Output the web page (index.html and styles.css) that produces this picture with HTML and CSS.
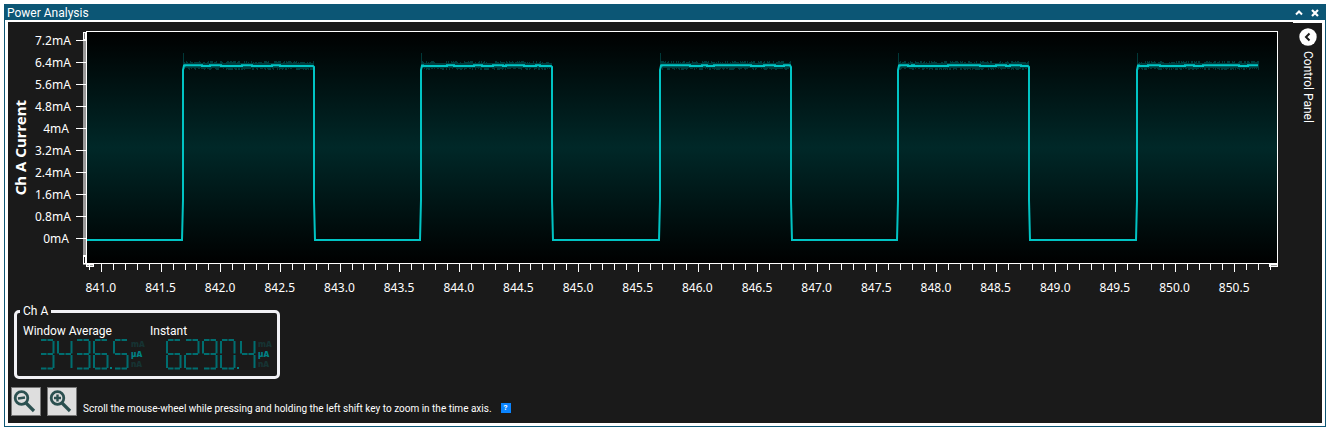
FILE: index.html
```
<!DOCTYPE html>
<html lang="en">
<head>
<meta charset="utf-8">
<title>Power Analysis</title>
<link rel="stylesheet" href="styles.css">
</head>
<body>
<section class="window">
  <header class="titlebar">
    <h1 class="title">Power Analysis</h1>
    <div class="window-actions">
      <button type="button" class="title-button" aria-label="Collapse">
        <svg width="8" height="8" viewBox="0 0 8 8"><path d="M1 5.5 4 2.5 7 5.5" fill="none" stroke="#fff" stroke-width="2"/></svg>
      </button>
      <button type="button" class="title-button" aria-label="Close">
        <svg width="8" height="8" viewBox="0 0 8 8"><path d="M1 1 7 7M7 1 1 7" fill="none" stroke="#fff" stroke-width="2.2"/></svg>
      </button>
    </div>
  </header>
  <div class="content">
    <main class="workspace">
      <div class="chart">
        <div class="axis-title">Ch A Current</div>
        <div class="y-labels">
          <span>7.2mA</span><span>6.4mA</span><span>5.6mA</span><span>4.8mA</span><span>4mA</span><span>3.2mA</span><span>2.4mA</span><span>1.6mA</span><span>0.8mA</span><span>0mA</span>
        </div>
        <svg class="plot" viewBox="0 0 1202 243" preserveAspectRatio="none" role="img" aria-label="Channel A current over time">
          <defs>
            <linearGradient id="glow" x1="0" y1="0" x2="0" y2="1">
              <stop offset="0" stop-color="#000"/>
              <stop offset="0.5" stop-color="#002828"/>
              <stop offset="1" stop-color="#000"/>
            </linearGradient>
          </defs>
          <g shape-rendering="crispEdges">
            <rect x="7" y="2" width="3" height="233" fill="#999"/>
            <rect x="7" y="2" width="3" height="9" fill="#fff"/>
            <rect x="8" y="3" width="1" height="6" fill="#777"/>
            <rect x="7" y="225" width="3" height="9" fill="#fff"/>
            <rect x="8" y="227" width="1" height="6" fill="#1a1a1a"/>
            <rect x="10" y="1" width="1192" height="233" fill="url(#glow)"/>
            <path d="M10.500 1.500H1201.500V233.500H10.500Z" fill="none" stroke="#fff"/>
            <rect x="10" y="234" width="8" height="3" fill="#fff"/>
            <rect x="11" y="235" width="6" height="1" fill="#999"/>
            <rect x="1193" y="234" width="9" height="3" fill="#fff"/>
            <rect x="1195" y="235" width="6" height="1" fill="#999"/>
            <path id="ticks" fill="none" stroke="#fff"/>
            <path id="noise" fill="none" stroke="#00c4c4" stroke-opacity="0.26"/>
          </g>
          <path id="wave" fill="none" stroke="#00c4c4" stroke-width="2"/>
        </svg>
        <div class="x-labels">
          <span>841.0</span><span>841.5</span><span>842.0</span><span>842.5</span><span>843.0</span><span>843.5</span><span>844.0</span><span>844.5</span><span>845.0</span><span>845.5</span><span>846.0</span><span>846.5</span><span>847.0</span><span>847.5</span><span>848.0</span><span>848.5</span><span>849.0</span><span>849.5</span><span>850.0</span><span>850.5</span>
        </div>
      </div>

      <svg class="symbols" width="0" height="0" aria-hidden="true">
        <defs>
          <path id="seg-a" d="M2 1H7.500M8.500 1H14"/>
          <path id="seg-b" d="M14.500 2V14.500"/>
          <path id="seg-c" d="M14.500 16V29"/>
          <path id="seg-d" d="M2 29.500H7.500M8.500 29.500H14"/>
          <path id="seg-e" d="M1 16V29"/>
          <path id="seg-f" d="M1 2V14.500"/>
          <path id="seg-g" d="M2 15H7.500M8.500 15H14"/>
        </defs>
      </svg>
      <fieldset class="channel">
        <legend>Ch A</legend>
        <div class="meter">
          <div class="meter-name">Window Average</div>
          <div class="readout">
            <svg class="digits" data-value="3436.5" width="92" height="32" viewBox="0 0 92 32" role="img" aria-label="3436.5"></svg>
            <div class="units"><span>mA</span><span class="active">µA</span><span>nA</span></div>
          </div>
        </div>
        <div class="meter">
          <div class="meter-name">Instant</div>
          <div class="readout">
            <svg class="digits" data-value="6290.4" width="92" height="32" viewBox="0 0 92 32" role="img" aria-label="6290.4"></svg>
            <div class="units"><span>mA</span><span class="active">µA</span><span>nA</span></div>
          </div>
        </div>
      </fieldset>

      <footer class="toolbar">
        <button type="button" class="zoom-button" aria-label="Zoom out">
          <svg width="26" height="26" viewBox="0 0 26 26" fill="none" stroke="#2b5050"><circle cx="9.500" cy="9" r="6.300" stroke-width="2.800"/><path d="M14 14 22 22" stroke-width="3.200"/><path d="M6 9.500 13 8.500" stroke-width="2.400"/></svg>
        </button>
        <button type="button" class="zoom-button" aria-label="Zoom in">
          <svg width="26" height="26" viewBox="0 0 26 26" fill="none" stroke="#2b5050"><circle cx="9.500" cy="9" r="6.300" stroke-width="2.800"/><path d="M14 14 22 22" stroke-width="3.200"/><path d="M6 9H13M9.500 5.500V12.500" stroke-width="2.400"/></svg>
        </button>
        <p class="hint">Scroll the mouse-wheel while pressing and holding the left shift key to zoom in the time axis.</p>
        <button type="button" class="help">?</button>
      </footer>
    </main>
    <aside class="side">
      <button type="button" class="side-toggle">
        <svg width="18" height="18" viewBox="0 0 18 18"><circle cx="9" cy="9" r="8.700" fill="#fff"/><path d="M10.500 5.500 7 9 10.500 12.500" fill="none" stroke="#1a1a1a" stroke-width="2"/></svg>
        <span>Control Panel</span>
      </button>
    </aside>
  </div>
</section>
<script src="chart.js"></script>
</body>
</html>
```

FILE: styles.css
```
* {
  box-sizing: border-box;
}

body {
  margin: 0;
  padding: 4px 6px 7px 4px;
  min-height: 100vh;
  display: flex;
  background: #fff;
  color: #fff;
  font-family: Roboto, "Open Sans", sans-serif;
  font-size: 12px;
}

button {
  margin: 0;
  padding: 0;
  border: 0;
  background: none;
  color: inherit;
  font: inherit;
}

svg {
  display: block;
}

.window {
  flex: 1;
  min-width: 0;
  display: flex;
  flex-direction: column;
  border: 1px solid #0c5675;
  border-top: 0;
}

.titlebar {
  height: 16px;
  display: flex;
  align-items: center;
  justify-content: space-between;
  padding: 1px 6px 0 2px;
  background: #0c5675;
}

.title {
  margin: 0;
  font-size: 12px;
  line-height: 16px;
  font-weight: 400;
}

.window-actions {
  display: flex;
  gap: 8px;
}

.content {
  flex: 1;
  display: flex;
  margin: 2px 3px 3px;
  background: #1a1a1a;
}

.workspace {
  flex: 1;
  min-width: 0;
  display: flex;
  flex-direction: column;
  padding: 8px 15px 6px 0;
}

.chart {
  display: grid;
  grid-template-columns: 24px 38px minmax(0, 1fr);
  grid-template-rows: 243px 28px;
  column-gap: 3px;
  font-family: "Noto Sans", sans-serif;
}

.axis-title {
  writing-mode: vertical-rl;
  transform: rotate(180deg);
  justify-self: center;
  align-self: center;
  padding-top: 8px;
  font-size: 15px;
  line-height: 20px;
  font-weight: 700;
}

.y-labels {
  display: flex;
  flex-direction: column;
  text-align: right;
  padding-right: 4px;
}

.y-labels span {
  line-height: 22px;
}

.plot {
  width: 100%;
  height: 243px;
  overflow: visible;
}

.x-labels {
  grid-column: 3;
  display: grid;
  grid-template-columns: repeat(20, minmax(0, 1fr));
  margin-left: -5px;
  margin-right: 14px;
  line-height: 30px;
  text-align: center;
}

.symbols {
  position: absolute;
}

.channel {
  align-self: flex-start;
  display: flex;
  width: 266px;
  margin: 2px 0 0 6px;
  padding: 4px 0 5px 6px;
  border: 3px solid #f0f0f4;
  border-radius: 5px;
}

.channel legend {
  padding: 0 3px;
  margin-left: -3px;
  line-height: 16px;
}

.meter {
  flex: 1;
}

.meter-name {
  line-height: 16px;
}

.readout {
  display: flex;
  padding-left: 16px;
}

.digits {
  fill: none;
  stroke: #006e70;
  stroke-width: 2;
}

.units {
  display: flex;
  flex-direction: column;
  font-family: "Open Sans", sans-serif;
  font-size: 8px;
  line-height: 10px;
  font-weight: 800;
  color: #163333;
}

.units .active {
  color: #008285;
}

.toolbar {
  display: flex;
  align-items: flex-end;
  gap: 6px;
  margin: 8px 0 0 3px;
}

.zoom-button {
  width: 30px;
  height: 29px;
  border: 1px solid #777;
  background: #dedede;
}

.hint {
  margin: 0;
  font-size: 10px;
  line-height: 14px;
}

.help {
  width: 10px;
  height: 10px;
  margin: 0 0 3px 3px;
  background: #0a84ff;
  font-size: 8px;
  line-height: 10px;
  font-weight: 700;
}

.side {
  width: 29px;
  border-top: 1px solid #fff;
  padding-top: 5px;
}

.side-toggle {
  display: flex;
  flex-direction: column;
  align-items: center;
  gap: 5px;
  width: 29px;
}

.side-toggle span {
  writing-mode: vertical-rl;
  font-size: 12px;
  line-height: 16px;
}
```

FILE: chart.js
```
const PLOT_LEFT = 10;
const HIGH = 35.5;
const LOW = 210;

let ticks = "";
for (let y = 10.5; y < 220; y += 22) ticks += `M0 ${y}H10`;
for (let i = -1; i < 99; i++) {
  const x = Math.round(PLOT_LEFT + 15 + i * 11.93) + 0.5;
  ticks += `M${x} 234V${i % 5 === 0 ? 242 : 240}`;
}
document.getElementById("ticks").setAttribute("d", ticks);

const pulses = [[107, 238], [345, 476], [584, 715], [822, 953], [1061, 1183]];
let wave = `M11 ${LOW}`;
let noise = "";
let seed = 7;
const random = () => {
  seed = (seed * 16807) % 2147483647;
  return seed / 2147483647;
};

pulses.forEach(([rise, fall], index) => {
  wave += `H${rise - 1}L${rise} 170V40L${rise + 1} ${HIGH}`;
  let x = rise + 2;
  while (x < fall - 6) {
    wave += `H${x}V${random() > 0.6 ? HIGH + 0.5 : HIGH - 0.3}`;
    x += 2 + Math.floor(random() * 12);
  }
  wave += `H${fall - 1}`;
  if (index < pulses.length - 1) wave += `L${fall} 37V170L${fall + 1} ${LOW}`;
  noise += `M${rise + 0.5} 23V50`;
  for (let n = rise + 1; n < fall; n++) {
    noise += `M${n + 0.5} ${31 + Math.floor(random() * 3)}V${38 + Math.floor(random() * 3)}`;
  }
});
document.getElementById("wave").setAttribute("d", wave);
document.getElementById("noise").setAttribute("d", noise);

const SEGMENTS = {
  0: "abcdef", 2: "abged", 3: "abgcd", 4: "fgbc", 5: "afgcd", 6: "afgedc", 9: "abfgcd"
};
document.querySelectorAll(".digits").forEach((display) => {
  let x = 0;
  let shapes = "";
  for (const ch of display.dataset.value) {
    if (ch === ".") {
      shapes += `<rect x="${x - 1}" y="28" width="2" height="2" fill="#008285" stroke="none"/>`;
      x += 2;
    } else {
      for (const s of SEGMENTS[ch]) shapes += `<use href="#seg-${s}" x="${x}"/>`;
      x += 18;
    }
  }
  display.innerHTML = shapes;
});
```
